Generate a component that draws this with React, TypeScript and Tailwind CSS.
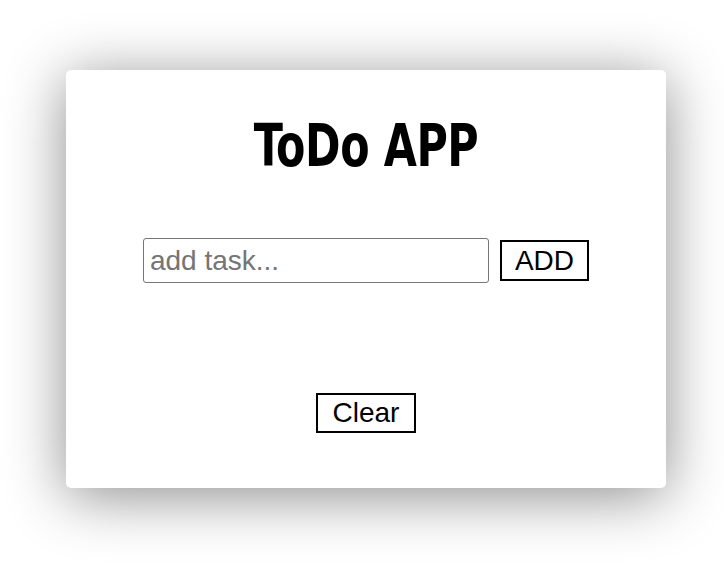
export default function App() {
  return (
    <div className="min-h-[566px] w-full bg-white flex justify-center pt-[70px] pl-[8px]" style={{ fontFamily: '"Liberation Sans", Arial, sans-serif' }}>
      <div className="w-[600px] h-[418px] bg-white rounded-[5px] shadow-[0_8px_60px_rgba(0,0,0,0.45)] flex flex-col items-center pt-[47px]">
        <h1
          className="text-[58px] leading-none font-bold tracking-[-0.5px] text-black scale-x-[0.82]"
          style={{ fontFamily: '"DejaVu Sans Condensed", "DejaVu Sans", sans-serif', fontStretch: 'condensed' }}
        >
          ToDo APP
        </h1>
        <form className="flex items-center gap-[11px] mt-[63px]" onSubmit={(e) => e.preventDefault()}>
          <input
            type="text"
            placeholder="add task..."
            className="w-[346px] h-[45px] border border-[#767676] rounded-[3px] px-[6px] text-[28px] leading-[32px] text-black placeholder:text-[#757575] outline-none"
          />
          <button type="submit" className="h-[41px] border-2 border-black px-[13px] text-[28px] leading-[32px] text-black bg-white">
            ADD
          </button>
        </form>
        <ul className="h-[110px]"></ul>
        <button className="h-[40px] border-2 border-black px-[15px] text-[28px] leading-[32px] text-black bg-white">Clear</button>
      </div>
    </div>
  )
}
